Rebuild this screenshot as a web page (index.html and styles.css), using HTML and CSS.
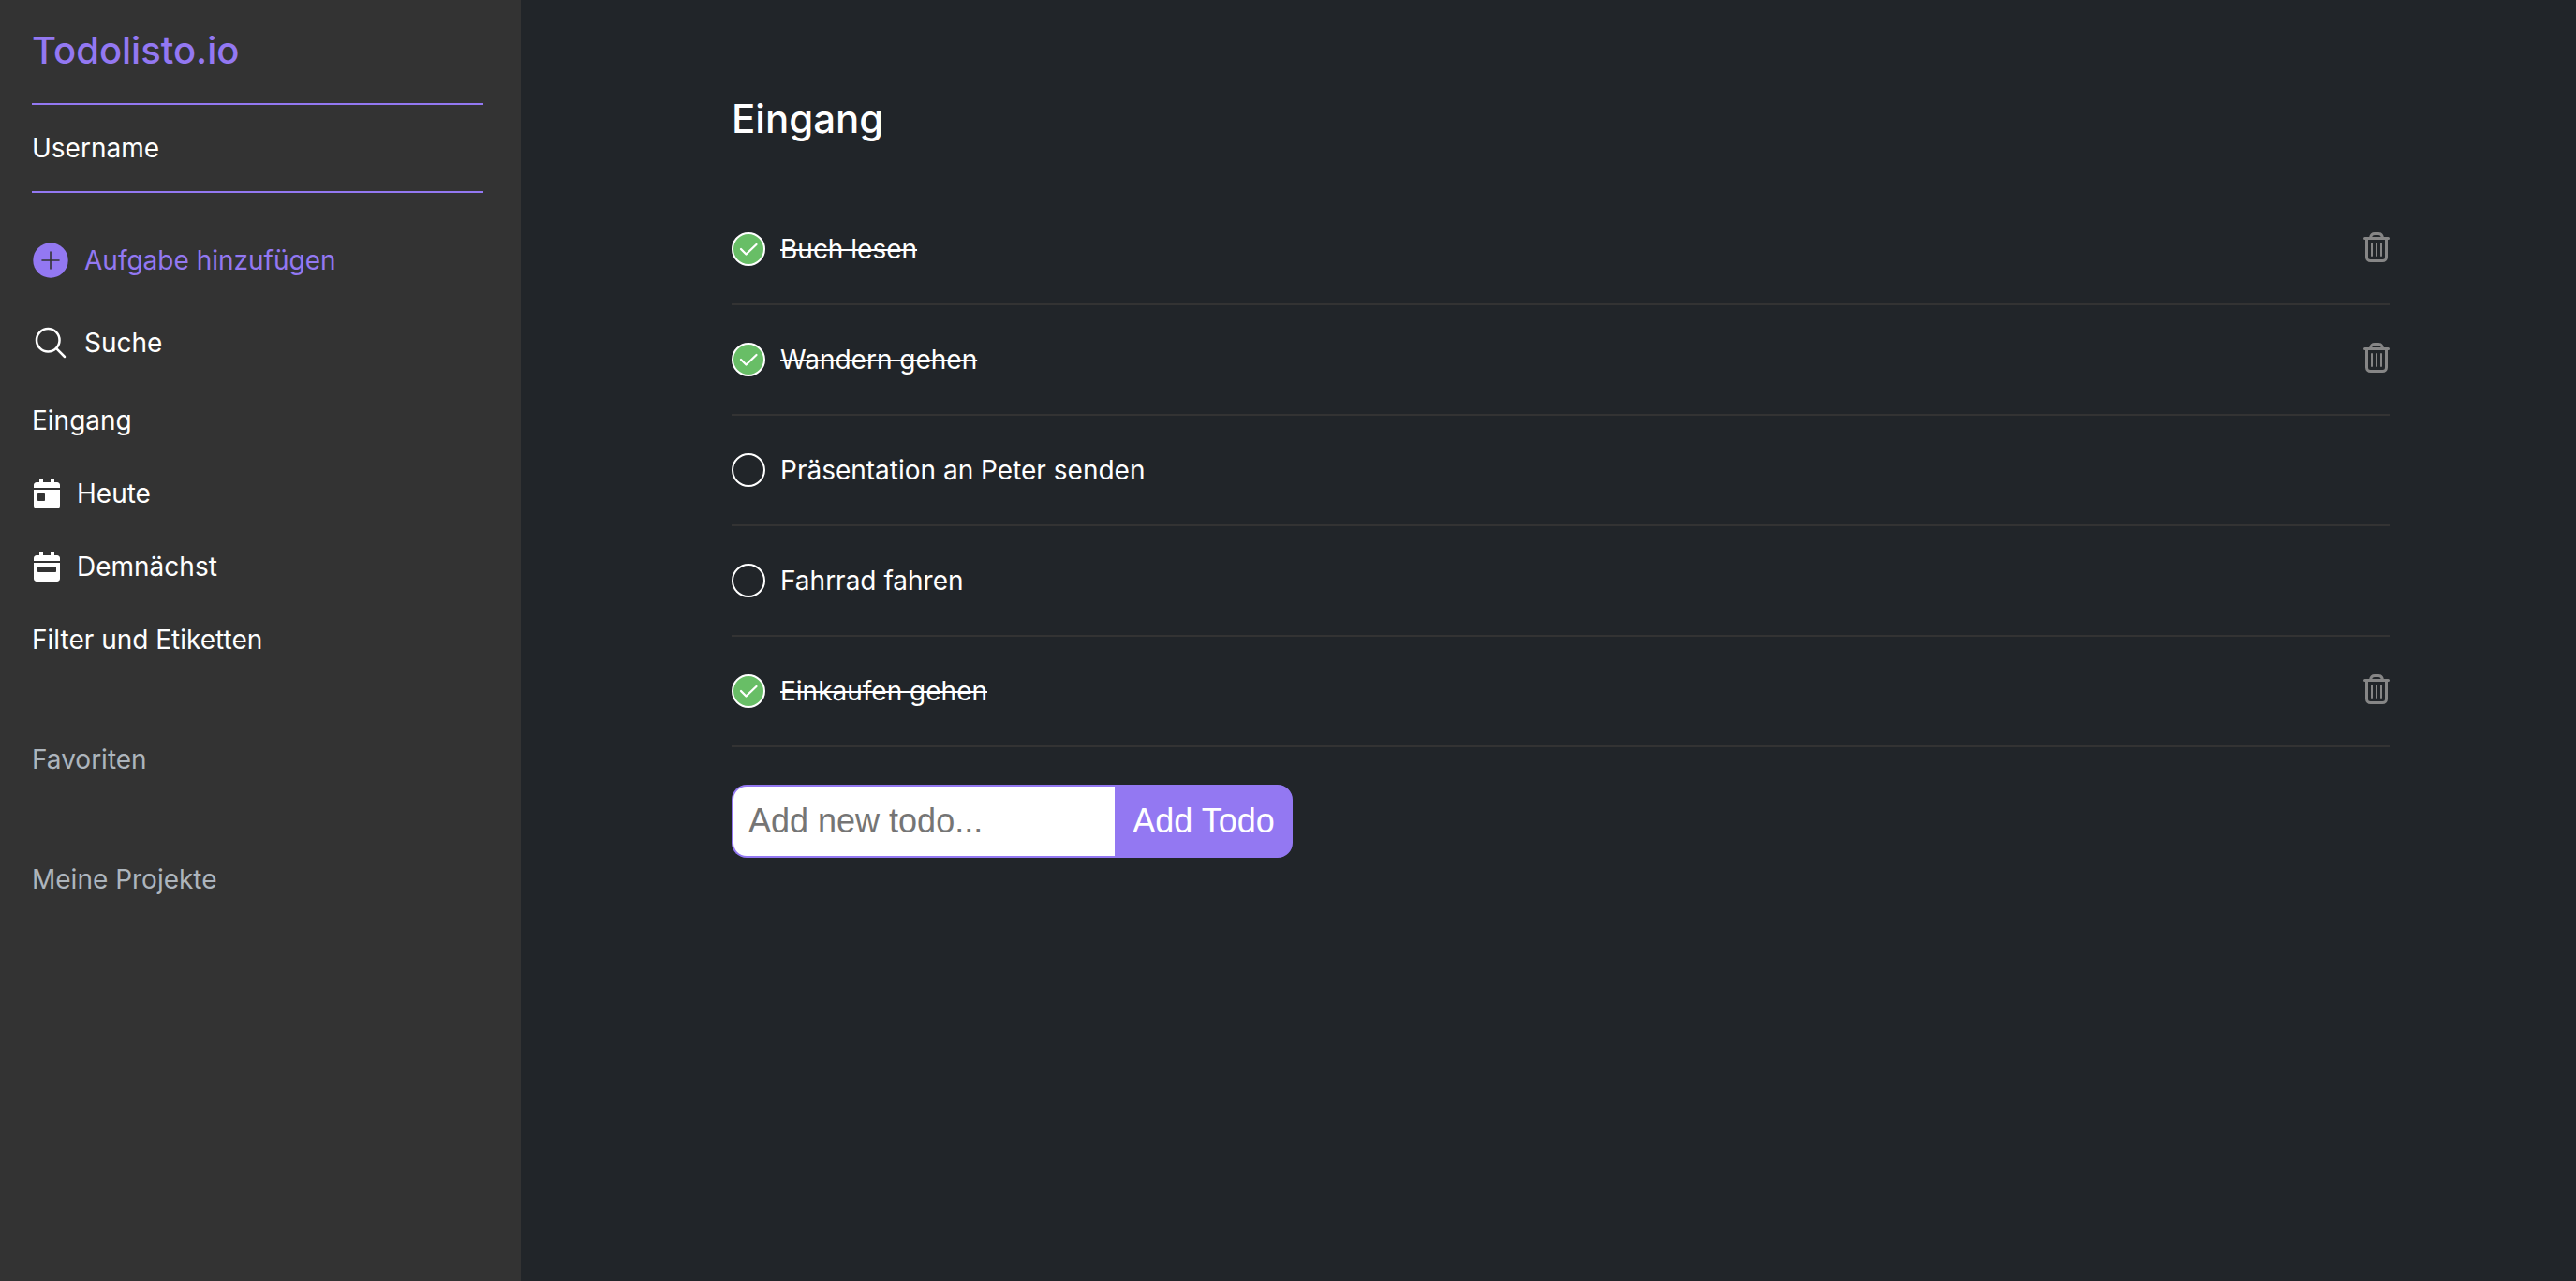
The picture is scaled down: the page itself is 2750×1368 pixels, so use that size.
FILE: index.html
```html
<!DOCTYPE html>
<html lang="de">
<head>
  <meta charset="utf-8">
  <meta name="viewport" content="width=device-width, initial-scale=1">
  <title>Todolisto.io</title>
  <link rel="stylesheet" href="styles.css">
</head>
<body>
  <svg class="symbols" aria-hidden="true">
    <symbol id="trash" viewBox="0 0 28 32">
      <g fill="none" stroke="currentColor" stroke-linecap="round" stroke-linejoin="round">
        <path stroke-width="3" d="M1.5 6.5h25M7.5 6c.4-2.600 2.200-4.500 4.500-4.500h4c2.300 0 4.100 1.900 4.500 4.500M3.500 6.500V26.500a4 4 0 0 0 4 4h13a4 4 0 0 0 4-4V6.500"/>
        <path stroke-width="2" d="M9 12v13M14 12v13M19 12v13"/>
      </g>
    </symbol>
  </svg>

  <div class="app">
    <aside class="sidebar">
      <h1 class="brand">Todolisto.io</h1>
      <p class="user">Username</p>
      <nav>
        <ul class="menu">
          <li>
            <button class="menu-item menu-item-large menu-item-accent" type="button">
              <svg class="icon-large" viewBox="0 0 40 40" aria-hidden="true">
                <circle cx="20" cy="20" r="18.700" fill="currentColor"/>
                <path d="M20 11v18M11 20h18" stroke="#333" stroke-width="1.600" stroke-linecap="round"/>
              </svg>
              Aufgabe hinzufügen
            </button>
          </li>
          <li>
            <button class="menu-item menu-item-large" type="button">
              <svg class="icon-large" viewBox="0 0 512 512" aria-hidden="true" fill="none" stroke="currentColor" stroke-width="32">
                <circle cx="221" cy="221" r="157"/>
                <path d="M338.290 338.290L448 448" stroke-linecap="round"/>
              </svg>
              Suche
            </button>
          </li>
          <li><a class="menu-item" href="#eingang">Eingang</a></li>
          <li>
            <a class="menu-item" href="#heute">
              <svg class="icon" viewBox="-32 0 512 512" aria-hidden="true" fill="currentColor">
                <path d="M0 464c0 26.500 21.500 48 48 48h352c26.500 0 48-21.500 48-48V192H0v272zm64-192c0-8.800 7.200-16 16-16h96c8.800 0 16 7.200 16 16v96c0 8.800-7.200 16-16 16H80c-8.800 0-16-7.200-16-16v-96zM400 64h-48V16c0-8.800-7.200-16-16-16h-32c-8.800 0-16 7.200-16 16v48H160V16c0-8.800-7.200-16-16-16h-32c-8.800 0-16 7.200-16 16v48H48C21.500 64 0 85.500 0 112v48h448v-48c0-26.500-21.500-48-48-48z"/>
              </svg>
              Heute
            </a>
          </li>
          <li>
            <a class="menu-item" href="#demnaechst">
              <svg class="icon" viewBox="-32 0 512 512" aria-hidden="true" fill="currentColor">
                <path d="M0 464c0 26.500 21.500 48 48 48h352c26.500 0 48-21.500 48-48V192H0v272zm64-192c0-8.800 7.200-16 16-16h288c8.800 0 16 7.200 16 16v64c0 8.800-7.200 16-16 16H80c-8.800 0-16-7.200-16-16v-64zM400 64h-48V16c0-8.800-7.200-16-16-16h-32c-8.800 0-16 7.200-16 16v48H160V16c0-8.800-7.200-16-16-16h-32c-8.800 0-16 7.200-16 16v48H48C21.500 64 0 85.500 0 112v48h448v-48c0-26.500-21.500-48-48-48z"/>
              </svg>
              Demnächst
            </a>
          </li>
          <li><a class="menu-item" href="#filter">Filter und Etiketten</a></li>
        </ul>
        <div class="sections">
          <h2 class="section-title">Favoriten</h2>
          <h2 class="section-title">Meine Projekte</h2>
        </div>
      </nav>
    </aside>

    <main class="content">
      <h2 class="page-title">Eingang</h2>
      <ul class="todos">
        <li class="todo">
          <input class="todo-check" type="checkbox" id="todo-1" checked>
          <label class="todo-label" for="todo-1">Buch lesen</label>
          <button class="todo-delete" type="button" aria-label="Buch lesen löschen"><svg class="trash" aria-hidden="true"><use href="#trash"/></svg></button>
        </li>
        <li class="todo">
          <input class="todo-check" type="checkbox" id="todo-2" checked>
          <label class="todo-label" for="todo-2">Wandern gehen</label>
          <button class="todo-delete" type="button" aria-label="Wandern gehen löschen"><svg class="trash" aria-hidden="true"><use href="#trash"/></svg></button>
        </li>
        <li class="todo">
          <input class="todo-check" type="checkbox" id="todo-3">
          <label class="todo-label" for="todo-3">Präsentation an Peter senden</label>
        </li>
        <li class="todo">
          <input class="todo-check" type="checkbox" id="todo-4">
          <label class="todo-label" for="todo-4">Fahrrad fahren</label>
        </li>
        <li class="todo">
          <input class="todo-check" type="checkbox" id="todo-5" checked>
          <label class="todo-label" for="todo-5">Einkaufen gehen</label>
          <button class="todo-delete" type="button" aria-label="Einkaufen gehen löschen"><svg class="trash" aria-hidden="true"><use href="#trash"/></svg></button>
        </li>
      </ul>
      <form class="add-form">
        <input class="add-input" type="text" placeholder="Add new todo..." aria-label="Add new todo">
        <button class="add-button" type="submit">Add Todo</button>
      </form>
    </main>
  </div>
</body>
</html>
```
FILE: styles.css
```css
:root {
  --accent: #9378f2;
  --panel: #333;
  --background: #212529;
  --muted: #adb5bd;
  --done: #68be66;
}

* {
  box-sizing: border-box;
}

body {
  margin: 0;
  background: var(--background);
  color: #fff;
  font: 400 28px/34px Inter, "Liberation Sans", sans-serif;
}

h1,
h2,
p,
ul {
  margin: 0;
  padding: 0;
  font-weight: 400;
  list-style: none;
}

.symbols {
  display: none;
}

.app {
  display: flex;
  min-height: 100vh;
}

/* Sidebar */

.sidebar {
  flex: 0 0 556px;
  padding: 0 40px 40px 34px;
  background: var(--panel);
}

.brand {
  padding: 30px 0 32px;
  border-bottom: 2px solid var(--accent);
  color: var(--accent);
  font-size: 40px;
  font-weight: 500;
  line-height: 48px;
}

.user {
  padding: 29px 0;
  border-bottom: 2px solid var(--accent);
}

.menu {
  display: flex;
  flex-direction: column;
  gap: 44px;
  padding-top: 50px;
}

.menu-item {
  display: flex;
  align-items: center;
  gap: 16px;
  height: 34px;
  padding: 0;
  border: 0;
  background: none;
  color: inherit;
  font: inherit;
  text-decoration: none;
  cursor: pointer;
}

.menu-item-large {
  height: 44px;
}

.menu-item-accent {
  color: var(--accent);
}

.icon {
  width: 32px;
  height: 32px;
}

.icon-large {
  width: 40px;
  height: 40px;
}

.sections {
  display: flex;
  flex-direction: column;
  gap: 94px;
  padding-top: 94px;
  color: var(--muted);
}

.section-title {
  font-size: 28px;
}

/* Todo list */

.content {
  flex: 1;
  min-width: 0;
  padding: 102px 199px 40px 225px;
}

.page-title {
  margin-bottom: 56px;
  font-size: 42px;
  font-weight: 500;
  line-height: 50px;
}

.todo {
  display: flex;
  align-items: center;
  gap: 16px;
  min-height: 118px;
  border-bottom: 2px solid var(--panel);
}

.todo-check {
  appearance: none;
  width: 36px;
  height: 36px;
  margin: 0;
  border: 2px solid #fff;
  border-radius: 50%;
  cursor: pointer;
}

.todo-check:checked {
  background: var(--done) url("data:image/svg+xml,%3Csvg xmlns='http://www.w3.org/2000/svg' viewBox='0 0 32 32'%3E%3Cpath d='M8 16l5.500 5.500L24.500 11' fill='none' stroke='white' stroke-width='2.300' stroke-linecap='round' stroke-linejoin='round'/%3E%3C/svg%3E") center / 32px no-repeat;
}

.todo-label {
  flex: 1;
  cursor: pointer;
}

.todo-check:checked + .todo-label {
  text-decoration: line-through 2px;
}

.todo-delete {
  display: flex;
  padding: 0 0 4px;
  border: 0;
  background: none;
  color: #868686;
  cursor: pointer;
}

.trash {
  width: 28px;
  height: 32px;
}

/* New todo form */

.add-form {
  display: flex;
  height: 78px;
  margin-top: 40px;
}

.add-input,
.add-button {
  margin: 0;
  border: 2px solid var(--accent);
  font: 36px "Liberation Sans", Arial, sans-serif;
}

.add-input {
  width: 409px;
  padding: 0 16px;
  border-right: 0;
  border-radius: 16px 0 0 16px;
  background: #fff;
  color: #212529;
}

.add-input::placeholder {
  color: #757575;
}

.add-button {
  width: 190px;
  padding: 0;
  border-radius: 0 16px 16px 0;
  background: var(--accent);
  color: #fff;
  cursor: pointer;
}
```
